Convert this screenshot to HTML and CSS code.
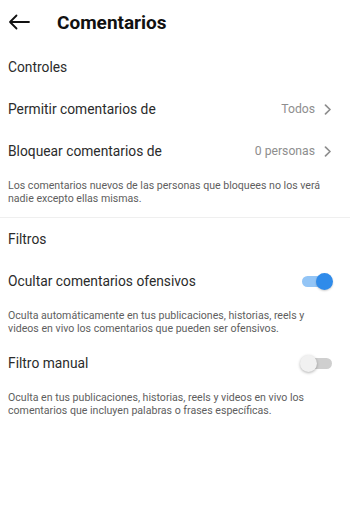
FILE: index.html
```html
<!DOCTYPE html>
<html lang="es">
<head>
    <meta charset="UTF-8">
    <meta name="viewport" content="width=device-width, initial-scale=1.0">
    <title>Comentarios</title>
    <link rel="stylesheet" href="styles.css">
</head>
<body>
    <div class="header">
        <button class="back" aria-label="Atrás">
            <svg width="22" height="16" viewBox="0 0 22 16"><path d="M21 8H2M8.5 1.5L2 8l6.5 6.5" fill="none" stroke="#111" stroke-width="1.8" stroke-linecap="round" stroke-linejoin="round"/></svg>
        </button>
        <h1>Comentarios</h1>
    </div>

    <div class="content">
        <div class="section-title">Controles</div>
        <div class="row">
            <span class="label">Permitir comentarios de</span>
            <span class="value">Todos
                <svg class="chev" width="8" height="11" viewBox="0 0 8 11"><path d="M1.5 1.2l4.5 4.3-4.5 4.3" fill="none" stroke="#8e8e8e" stroke-width="1.7" stroke-linecap="round" stroke-linejoin="round"/></svg>
            </span>
        </div>
        <div class="row">
            <span class="label">Bloquear comentarios de</span>
            <span class="value">0 personas
                <svg class="chev" width="8" height="11" viewBox="0 0 8 11"><path d="M1.5 1.2l4.5 4.3-4.5 4.3" fill="none" stroke="#8e8e8e" stroke-width="1.7" stroke-linecap="round" stroke-linejoin="round"/></svg>
            </span>
        </div>
        <p class="desc last">Los comentarios nuevos de las personas que bloquees no los verá nadie excepto ellas mismas.</p>

        <div class="divider"></div>

        <div class="section-title">Filtros</div>
        <div class="row">
            <span class="label">Ocultar comentarios ofensivos</span>
            <span class="switch on"><span class="knob"></span></span>
        </div>
        <p class="desc">Oculta automáticamente en tus publicaciones, historias, reels y videos en vivo los comentarios que pueden ser ofensivos.</p>
        <div class="row">
            <span class="label">Filtro manual</span>
            <span class="switch"><span class="knob"></span></span>
        </div>
        <p class="desc">Oculta en tus publicaciones, historias, reels y videos en vivo los comentarios que incluyen palabras o frases específicas.</p>
    </div>
</body>
</html>
```

FILE: styles.css
```css
body { margin: 0; font-family: Roboto, "Noto Sans", sans-serif; background: #fff; color: #262626; width: 350px; }
.header { display: flex; align-items: center; height: 44px; padding-left: 8px; }
.back { border: none; background: none; padding: 0; width: 22px; height: 16px; display: flex; margin-top: 0; }
.header h1 { font-size: 19px; font-weight: 700; margin: 0 0 0 27px; color: #111; }
.content { padding-top: 2px; }
.section-title { height: 42px; display: flex; align-items: center; padding: 0 8px; font-size: 13.8px; color: #2b2b2b; }
.section-title.filters { height: 41px; }
.row { height: 42px; display: flex; align-items: center; justify-content: space-between; padding: 0 18px 0 8px; }
.row.toggle { height: 40px; }
.label { font-size: 13.8px; color: #2b2b2b; }
.value { display: flex; align-items: center; gap: 9px; font-size: 12.2px; color: #8e8e8e; }
.chev { display: block; }
.desc { margin: 0; padding: 7px 14px 7px 8px; font-size: 10.6px; line-height: 13px; color: #5e5e5e; }
.desc.last { padding-bottom: 12px; }
.divider { height: 1px; background: #efefef; }
.switch { position: relative; width: 30px; height: 11px; border-radius: 6px; background: #cfcfcf; margin-right: 0; }
.switch .knob { position: absolute; top: -3px; left: -2px; width: 17px; height: 17px; border-radius: 50%; background: #f1f1f1; box-shadow: 0 1px 3px rgba(0,0,0,0.3); }
.switch.on { background: #93c5f6; }
.switch.on .knob { left: auto; right: -1px; background: #2f8bea; box-shadow: 0 1px 2px rgba(0,0,0,0.2); }
```
